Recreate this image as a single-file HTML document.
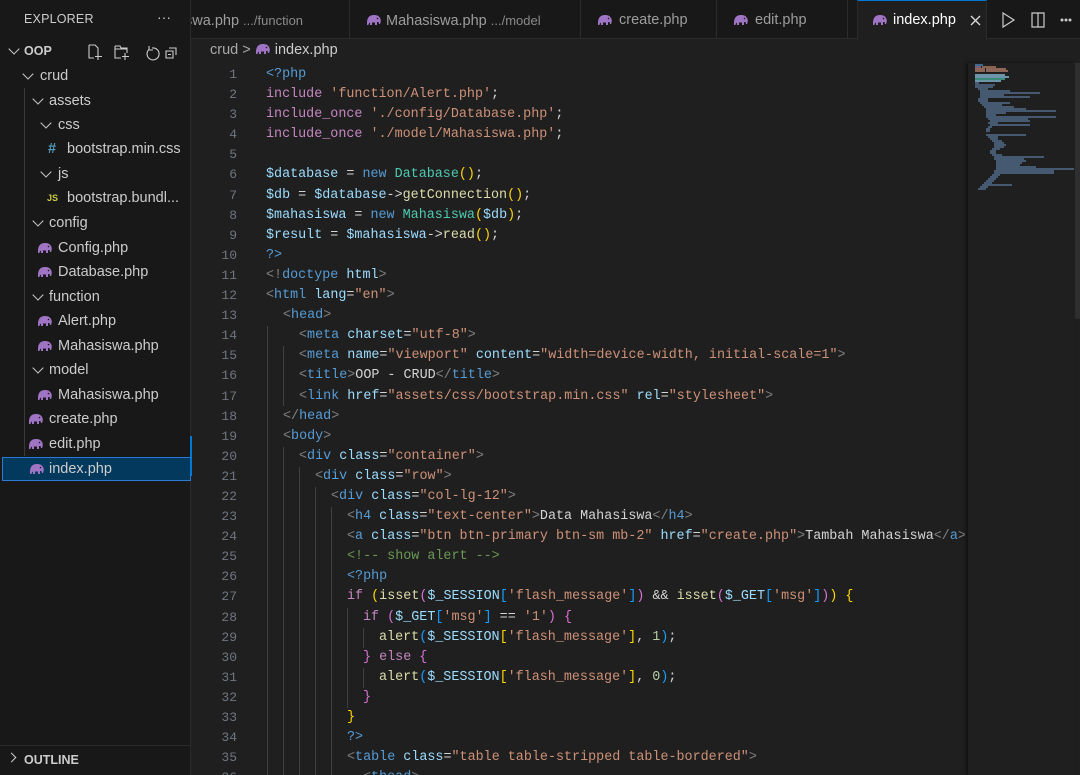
<!DOCTYPE html>
<html><head><meta charset="utf-8"><style>
*{margin:0;padding:0;box-sizing:border-box}
body{width:1080px;height:775px;overflow:hidden;background:#1f1f1f;font-family:"Liberation Sans",sans-serif;position:relative;color:#ccc}
#side{position:absolute;left:0;top:0;width:191px;height:775px;background:#181818;border-right:1px solid #2b2b2b}
.row{position:absolute;left:0;width:190px;height:24px;line-height:24px;font-size:14.5px;color:#ccc;white-space:nowrap}
.chev{position:absolute;top:6px;width:8px;height:8px;border-left:1.3px solid #ccc;border-bottom:1.3px solid #ccc;transform:rotate(-45deg)}
.ele{position:absolute;top:6px}
#tabs{position:absolute;left:191px;top:0;width:889px;height:39px;background:#181818;border-bottom:1px solid #2b2b2b}
.tab{position:absolute;top:0;height:39px;line-height:41px;font-size:14.5px;color:#9d9d9d;border-right:1px solid #2b2b2b;white-space:nowrap;overflow:hidden}
.tab small{font-size:13px;color:#8a8a8a}
#code{position:absolute;left:191px;top:65px;width:777px;height:710px;overflow:hidden;font-family:"Liberation Mono",monospace}
.l{height:20.1px;line-height:20.1px;white-space:pre;position:relative;color:#d4d4d4;font-size:13.4px}
.n{position:absolute;left:0;width:46px;text-align:right;color:#6e7681;font-size:13px}
.c{position:absolute;left:75px}
.k{color:#c586c0}.b{color:#569cd6}.a{color:#9cdcfe}.s{color:#ce9178}.f{color:#dcdcaa}.cl{color:#4ec9b0}.g{color:#808080}.m{color:#6a9955}.y{color:#ffd700}.p{color:#da70d6}.bl{color:#179fff}
.guide{position:absolute;width:1px;background:#404040}
</style></head><body>
<svg width="0" height="0" style="position:absolute"><defs><g id="el"><path d="M1 9 C1 3 4 1 8 1 C11 1 13 2 14 4 C15 5 15 8 14 10 L13 10 L12.5 8 L11 8 L11 11 L9 11 L9 8.5 L6 8.5 L6 11 L4 11 L4 8.5 C3 9 2.5 10 2.5 11 L1 11 Z" fill="#a074c4"/><circle cx="11.5" cy="4.5" r="0.8" fill="#181818"/></g></defs></svg>

<div id="side">
 <div style="position:absolute;left:24px;top:12px;font-size:12.5px;color:#ccc;letter-spacing:.2px">EXPLORER</div>
 <div style="position:absolute;left:157px;top:9px;font-size:14px;color:#ccc">···</div>
 <div class="row" style="top:39px"><span class="chev" style="left:10px"></span><b style="position:absolute;left:24px;font-size:12.5px">OOP</b>
  <svg style="position:absolute;left:87px;top:4px" width="90" height="18" fill="none" stroke="#ccc" stroke-width="1.1"><path d="M2 2h6l3 3v5M2 2v13h5M11 10v7M8 13.5h7"/><path d="M28 3h5l1 2h6v5M28 3v12h6M38 10v7M35 13.5h7M28 6h12"/><path d="M65 5a6 6 0 1 1-3 1.5M62 3v4h4"/><path d="M82 5h7v7M79 8h7v7h-7zM81 11.5h3"/></svg></div>
 <div class="row" style="top:64px"><span class="chev" style="left:24px"></span><span style="position:absolute;left:40px">crud</span></div>
 <div class="row" style="top:89px"><span class="chev" style="left:34px"></span><span style="position:absolute;left:49px">assets</span></div>
 <div class="row" style="top:113px"><span class="chev" style="left:42px"></span><span style="position:absolute;left:58px">css</span></div>
 <div class="row" style="top:137px"><span style="position:absolute;left:48px;color:#519aba;font-weight:bold">#</span><span style="position:absolute;left:67px">bootstrap.min.css</span></div>
 <div class="row" style="top:162px"><span class="chev" style="left:42px"></span><span style="position:absolute;left:58px">js</span></div>
 <div class="row" style="top:186px"><span style="position:absolute;left:47px;color:#cbcb41;font-size:9px;font-weight:bold">JS</span><span style="position:absolute;left:67px">bootstrap.bundl...</span></div>
 <div class="row" style="top:211px"><span class="chev" style="left:34px"></span><span style="position:absolute;left:49px">config</span></div>
 <div class="row" style="top:236px"><svg class="ele" style="left:37px" width="16" height="12"><use href="#el"/></svg><span style="position:absolute;left:58px">Config.php</span></div>
 <div class="row" style="top:260px"><svg class="ele" style="left:37px" width="16" height="12"><use href="#el"/></svg><span style="position:absolute;left:58px">Database.php</span></div>
 <div class="row" style="top:285px"><span class="chev" style="left:34px"></span><span style="position:absolute;left:49px">function</span></div>
 <div class="row" style="top:309px"><svg class="ele" style="left:37px" width="16" height="12"><use href="#el"/></svg><span style="position:absolute;left:58px">Alert.php</span></div>
 <div class="row" style="top:334px"><svg class="ele" style="left:37px" width="16" height="12"><use href="#el"/></svg><span style="position:absolute;left:58px">Mahasiswa.php</span></div>
 <div class="row" style="top:358px"><span class="chev" style="left:34px"></span><span style="position:absolute;left:49px">model</span></div>
 <div class="row" style="top:383px"><svg class="ele" style="left:37px" width="16" height="12"><use href="#el"/></svg><span style="position:absolute;left:58px">Mahasiswa.php</span></div>
 <div class="row" style="top:407px"><svg class="ele" style="left:28px" width="16" height="12"><use href="#el"/></svg><span style="position:absolute;left:49px">create.php</span></div>
 <div class="row" style="top:432px"><svg class="ele" style="left:28px" width="16" height="12"><use href="#el"/></svg><span style="position:absolute;left:49px">edit.php</span></div>
 <div class="row" style="top:457px;left:2px;width:189px;background:#04395e;border:1px solid #2b7bd4;height:24px;line-height:22px"><svg class="ele" style="left:26px;top:5px" width="16" height="12"><use href="#el"/></svg><span style="position:absolute;left:46px">index.php</span></div>
 <div style="position:absolute;left:24px;top:88px;width:1px;height:368px;background:#3a3a3a"></div>
 <div style="position:absolute;left:0;top:745px;width:191px;height:30px;border-top:1px solid #2b2b2b"><span class="chev" style="left:8px;top:8px;transform:rotate(-135deg);width:7px;height:7px"></span><b style="position:absolute;left:24px;top:7px;font-size:12.5px">OUTLINE</b></div>
</div>

<div id="tabs">
 <div class="tab" style="left:0;width:159px"><span style="position:absolute;left:-6px">swa.php <small>.../function</small></span></div>
 <div class="tab" style="left:159px;width:231px"><svg style="position:absolute;left:16px;top:14px" width="16" height="12"><use href="#el"/></svg><span style="position:absolute;left:36px">Mahasiswa.php <small>.../model</small></span></div>
 <div class="tab" style="left:390px;width:136px"><svg style="position:absolute;left:16px;top:14px" width="16" height="12"><use href="#el"/></svg><span style="position:absolute;left:38px">create.php</span></div>
 <div class="tab" style="left:526px;width:131px"><svg style="position:absolute;left:16px;top:14px" width="16" height="12"><use href="#el"/></svg><span style="position:absolute;left:38px">edit.php</span></div>
 <div class="tab" style="left:666px;width:130px;height:40px;background:#1f1f1f;color:#fff;border-top:1px solid #0078d4;border-left:1px solid #2b2b2b"><svg style="position:absolute;left:14px;top:13px" width="16" height="12"><use href="#el"/></svg><span style="position:absolute;left:35px;top:-1px">index.php</span><svg style="position:absolute;left:112px;top:14px" width="11" height="11" stroke="#ddd" stroke-width="1.3"><path d="M1 1l9 9M10 1l-9 9"/></svg></div>
 <svg style="position:absolute;left:810px;top:11px" width="80" height="18" fill="none" stroke="#ccc" stroke-width="1.2"><path d="M2 2l11 7-11 7z"/><path d="M31 2h12v14h-12zM37 2v14"/><circle cx="61" cy="9" r=".9" fill="#ccc"/><circle cx="65" cy="9" r=".9" fill="#ccc"/><circle cx="69" cy="9" r=".9" fill="#ccc"/></svg>
</div>

<div style="position:absolute;left:210px;top:42px;font-size:14.5px;color:#a9a9a9;white-space:nowrap">crud &gt; <svg style="vertical-align:-1px" width="16" height="12"><use href="#el"/></svg> <span style="color:#ccc">index.php</span></div>

<div style="position:absolute;left:190px;top:436px;width:2px;height:40px;background:#0078d4"></div>

<div id="code">
<div class="guide" style="left:76px;top:261px;height:460px"></div>
<div class="guide" style="left:92px;top:281px;height:60px"></div>
<div class="guide" style="left:92px;top:382px;height:340px"></div>
<div class="guide" style="left:108px;top:402px;height:320px"></div>
<div class="guide" style="left:124px;top:422px;height:300px"></div>
<div class="guide" style="left:140px;top:442px;height:280px"></div>
<div class="guide" style="left:156px;top:543px;height:100px"></div>
<div class="guide" style="left:172px;top:563px;height:20px"></div>
<div class="guide" style="left:172px;top:603px;height:20px"></div>
<div class="l"><span class="n">1</span><span class="c"><span class="b">&lt;?php</span></span></div>
<div class="l"><span class="n">2</span><span class="c"><span class="k">include</span> <span class="s">'function/Alert.php'</span>;</span></div>
<div class="l"><span class="n">3</span><span class="c"><span class="k">include_once</span> <span class="s">'./config/Database.php'</span>;</span></div>
<div class="l"><span class="n">4</span><span class="c"><span class="k">include_once</span> <span class="s">'./model/Mahasiswa.php'</span>;</span></div>
<div class="l"><span class="n">5</span></div>
<div class="l"><span class="n">6</span><span class="c"><span class="a">$database</span> = <span class="b">new</span> <span class="cl">Database</span><span class="y">()</span>;</span></div>
<div class="l"><span class="n">7</span><span class="c"><span class="a">$db</span> = <span class="a">$database</span>-&gt;<span class="f">getConnection</span><span class="y">()</span>;</span></div>
<div class="l"><span class="n">8</span><span class="c"><span class="a">$mahasiswa</span> = <span class="b">new</span> <span class="cl">Mahasiswa</span><span class="y">(</span><span class="a">$db</span><span class="y">)</span>;</span></div>
<div class="l"><span class="n">9</span><span class="c"><span class="a">$result</span> = <span class="a">$mahasiswa</span>-&gt;<span class="f">read</span><span class="y">()</span>;</span></div>
<div class="l"><span class="n">10</span><span class="c"><span class="b">?&gt;</span></span></div>
<div class="l"><span class="n">11</span><span class="c"><span class="g">&lt;!</span><span class="b">doctype</span> <span class="a">html</span><span class="g">&gt;</span></span></div>
<div class="l"><span class="n">12</span><span class="c"><span class="g">&lt;</span><span class="b">html</span> <span class="a">lang</span>=<span class="s">"en"</span><span class="g">&gt;</span></span></div>
<div class="l"><span class="n">13</span><span class="c" style="left:92px"><span class="g">&lt;</span><span class="b">head</span><span class="g">&gt;</span></span></div>
<div class="l"><span class="n">14</span><span class="c" style="left:108px"><span class="g">&lt;</span><span class="b">meta</span> <span class="a">charset</span>=<span class="s">"utf-8"</span><span class="g">&gt;</span></span></div>
<div class="l"><span class="n">15</span><span class="c" style="left:108px"><span class="g">&lt;</span><span class="b">meta</span> <span class="a">name</span>=<span class="s">"viewport"</span> <span class="a">content</span>=<span class="s">"width=device-width, initial-scale=1"</span><span class="g">&gt;</span></span></div>
<div class="l"><span class="n">16</span><span class="c" style="left:108px"><span class="g">&lt;</span><span class="b">title</span><span class="g">&gt;</span>OOP - CRUD<span class="g">&lt;/</span><span class="b">title</span><span class="g">&gt;</span></span></div>
<div class="l"><span class="n">17</span><span class="c" style="left:108px"><span class="g">&lt;</span><span class="b">link</span> <span class="a">href</span>=<span class="s">"assets/css/bootstrap.min.css"</span> <span class="a">rel</span>=<span class="s">"stylesheet"</span><span class="g">&gt;</span></span></div>
<div class="l"><span class="n">18</span><span class="c" style="left:92px"><span class="g">&lt;/</span><span class="b">head</span><span class="g">&gt;</span></span></div>
<div class="l"><span class="n">19</span><span class="c" style="left:92px"><span class="g">&lt;</span><span class="b">body</span><span class="g">&gt;</span></span></div>
<div class="l"><span class="n">20</span><span class="c" style="left:108px"><span class="g">&lt;</span><span class="b">div</span> <span class="a">class</span>=<span class="s">"container"</span><span class="g">&gt;</span></span></div>
<div class="l"><span class="n">21</span><span class="c" style="left:124px"><span class="g">&lt;</span><span class="b">div</span> <span class="a">class</span>=<span class="s">"row"</span><span class="g">&gt;</span></span></div>
<div class="l"><span class="n">22</span><span class="c" style="left:140px"><span class="g">&lt;</span><span class="b">div</span> <span class="a">class</span>=<span class="s">"col-lg-12"</span><span class="g">&gt;</span></span></div>
<div class="l"><span class="n">23</span><span class="c" style="left:156px"><span class="g">&lt;</span><span class="b">h4</span> <span class="a">class</span>=<span class="s">"text-center"</span><span class="g">&gt;</span>Data Mahasiswa<span class="g">&lt;/</span><span class="b">h4</span><span class="g">&gt;</span></span></div>
<div class="l"><span class="n">24</span><span class="c" style="left:156px"><span class="g">&lt;</span><span class="b">a</span> <span class="a">class</span>=<span class="s">"btn btn-primary btn-sm mb-2"</span> <span class="a">href</span>=<span class="s">"create.php"</span><span class="g">&gt;</span>Tambah Mahasiswa<span class="g">&lt;/</span><span class="b">a</span><span class="g">&gt;</span></span></div>
<div class="l"><span class="n">25</span><span class="c" style="left:156px"><span class="m">&lt;!-- show alert --&gt;</span></span></div>
<div class="l"><span class="n">26</span><span class="c" style="left:156px"><span class="b">&lt;?php</span></span></div>
<div class="l"><span class="n">27</span><span class="c" style="left:156px"><span class="k">if</span> <span class="y">(</span><span class="f">isset</span><span class="p">(</span><span class="a">$_SESSION</span><span class="bl">[</span><span class="s">'flash_message'</span><span class="bl">]</span><span class="p">)</span> &amp;&amp; <span class="f">isset</span><span class="p">(</span><span class="a">$_GET</span><span class="bl">[</span><span class="s">'msg'</span><span class="bl">]</span><span class="p">)</span><span class="y">)</span> <span class="y">{</span></span></div>
<div class="l"><span class="n">28</span><span class="c" style="left:172px"><span class="k">if</span> <span class="p">(</span><span class="a">$_GET</span><span class="bl">[</span><span class="s">'msg'</span><span class="bl">]</span> == <span class="s">'1'</span><span class="p">)</span> <span class="p">{</span></span></div>
<div class="l"><span class="n">29</span><span class="c" style="left:188px"><span class="f">alert</span><span class="bl">(</span><span class="a">$_SESSION</span><span class="y">[</span><span class="s">'flash_message'</span><span class="y">]</span>, <span style="color:#b5cea8">1</span><span class="bl">)</span>;</span></div>
<div class="l"><span class="n">30</span><span class="c" style="left:172px"><span class="p">}</span> <span class="k">else</span> <span class="p">{</span></span></div>
<div class="l"><span class="n">31</span><span class="c" style="left:188px"><span class="f">alert</span><span class="bl">(</span><span class="a">$_SESSION</span><span class="y">[</span><span class="s">'flash_message'</span><span class="y">]</span>, <span style="color:#b5cea8">0</span><span class="bl">)</span>;</span></div>
<div class="l"><span class="n">32</span><span class="c" style="left:172px"><span class="p">}</span></span></div>
<div class="l"><span class="n">33</span><span class="c" style="left:156px"><span class="y">}</span></span></div>
<div class="l"><span class="n">34</span><span class="c" style="left:156px"><span class="b">?&gt;</span></span></div>
<div class="l"><span class="n">35</span><span class="c" style="left:156px"><span class="g">&lt;</span><span class="b">table</span> <span class="a">class</span>=<span class="s">"table table-stripped table-bordered"</span><span class="g">&gt;</span></span></div>
<div class="l"><span class="n">36</span><span class="c" style="left:172px"><span class="g">&lt;</span><span class="b">thead</span><span class="g">&gt;</span></span></div>
</div>

<div style="position:absolute;left:968px;top:63px;width:107px;height:712px;background:#1f1f1f;box-shadow:-2px 0 3px #111"></div>
<svg style="position:absolute;left:974px;top:64px" width="100" height="160">
<g stroke-width="1.2">
<path d="M1 1h8" stroke="#569cd6"/><path d="M1 3h6" stroke="#c586c0"/><path d="M8 3h14" stroke="#ce9178"/><path d="M1 5h10M12 5h20" stroke="#ce9178"/><path d="M1 7h10M12 7h22" stroke="#ce9178"/>
<path d="M1 11h30" stroke="#9cdcfe"/><path d="M1 13h34" stroke="#9cdcfe"/><path d="M1 15h30" stroke="#4ec9b0"/><path d="M1 17h26" stroke="#9cdcfe"/>
<path d="M1 19h4M1 21h20M1 23h18M4 25h10M6 27h30M6 29h60M6 31h24M6 33h50M4 35h10M4 37h10M6 39h30M8 41h20M10 43h30M12 45h40M12 47h70M12 49h20M12 51h10M12 53h70M14 55h40M16 57h40M14 59h10M16 61h40M14 63h4M12 65h4M12 67h4" stroke="#5c7ea0"/>
<path d="M12 71h40M14 73h10M16 75h8M18 77h10M20 79h10M20 81h12M20 83h10M18 85h8M16 87h6M16 89h6M18 91h10M20 93h50M20 95h30M22 97h30M22 99h26M22 101h24M22 103h40M22 105h80M20 107h60M20 109h60M18 111h8M16 113h8M14 115h8M12 117h8M10 119h8M8 121h30M6 123h8M4 125h8" stroke="#5c7ea0"/>
</g></svg>
<div style="position:absolute;left:1075px;top:63px;width:5px;height:256px;background:#2e2e2e"></div>
</body></html>
